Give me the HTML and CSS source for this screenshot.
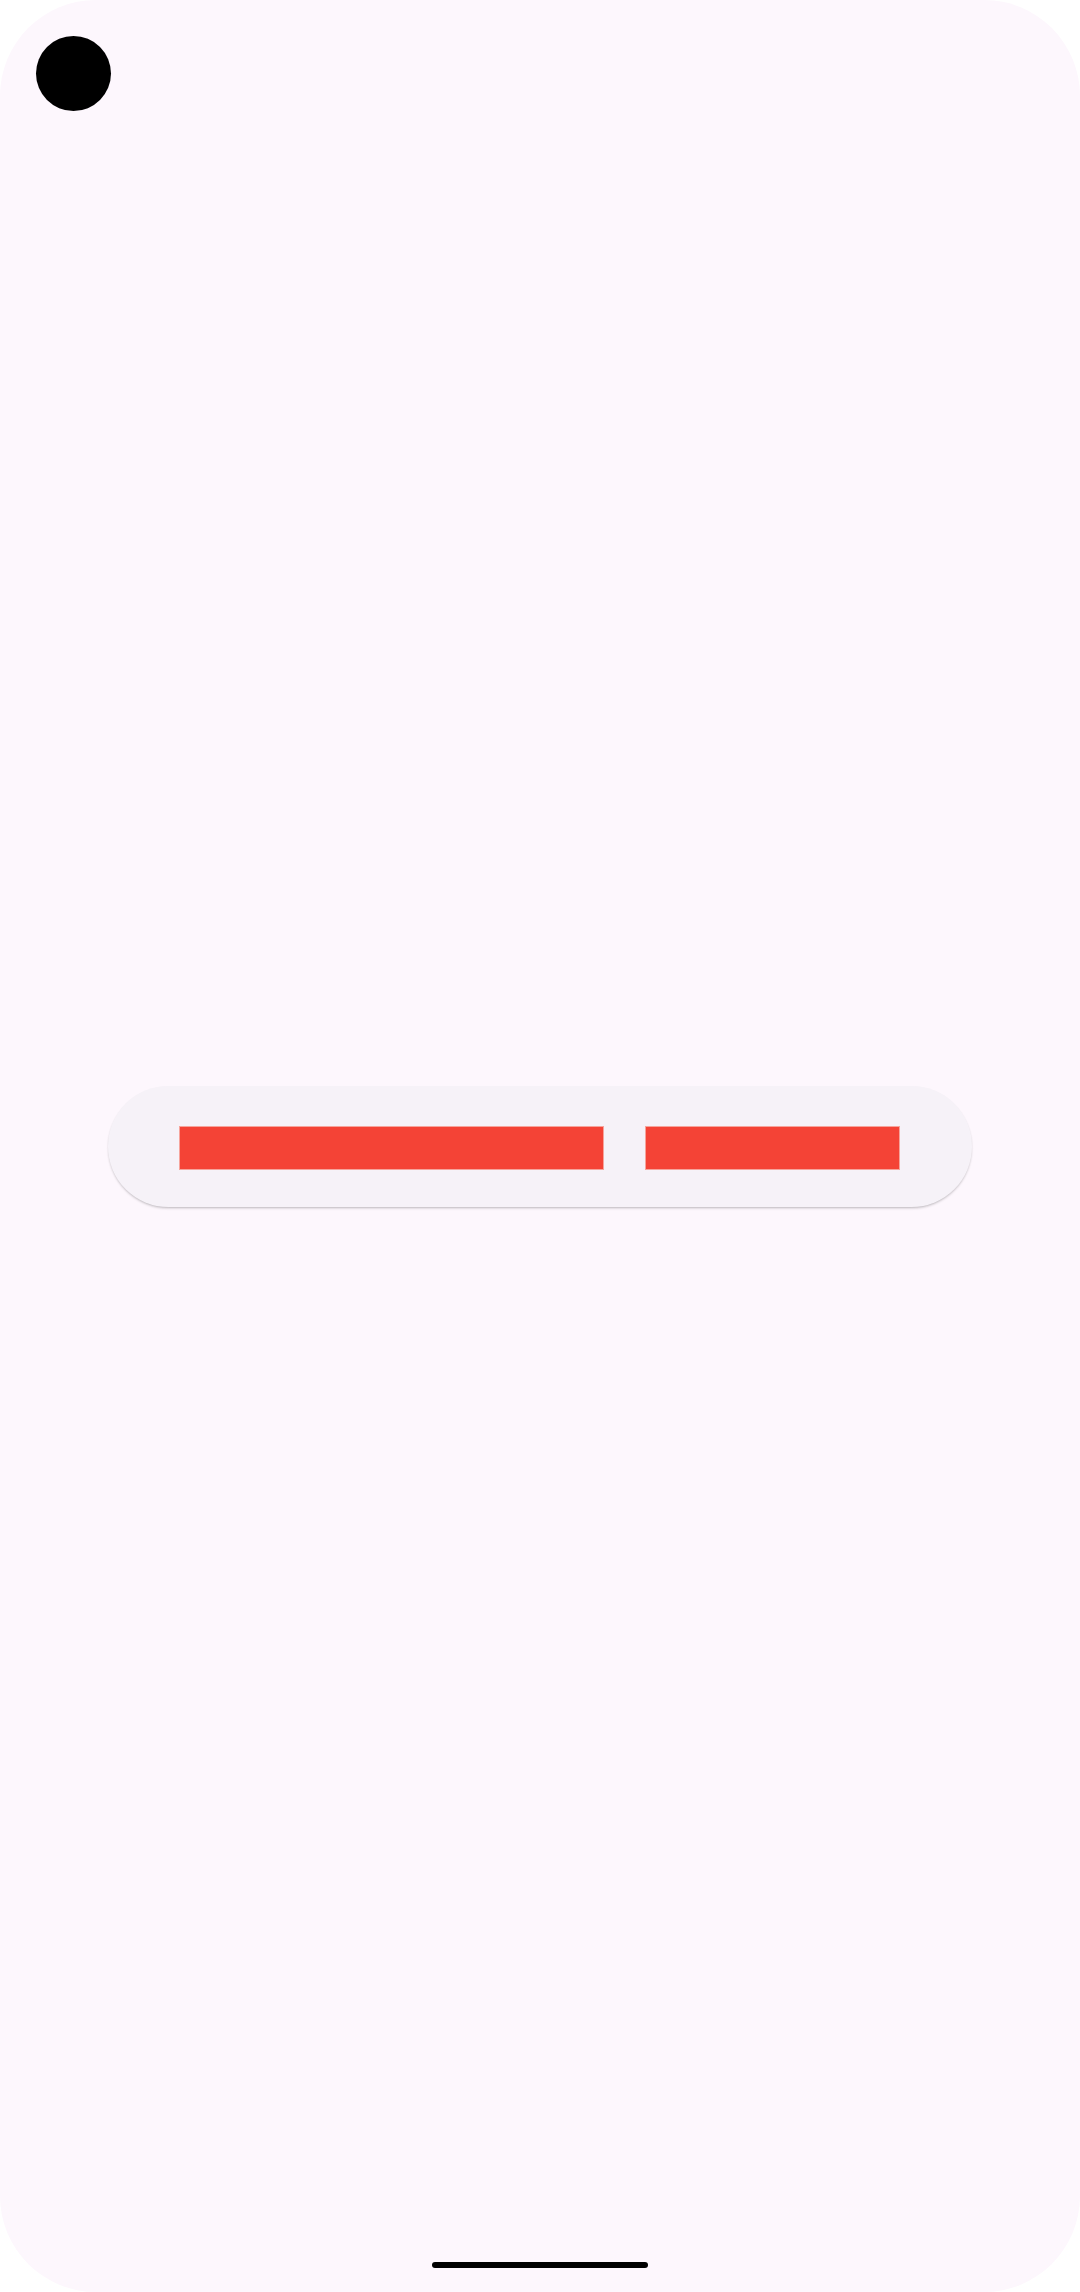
FILE: index.html
```html
<!DOCTYPE html>
<html lang="en">
<head>
<meta charset="utf-8">
<title>Screen</title>
<link rel="stylesheet" href="styles.css">
</head>
<body>
<div class="screen">
  <div class="camera"></div>
  <div class="content">
    <div class="pill">
      <div class="bar bar-long"></div>
      <div class="bar bar-short"></div>
    </div>
  </div>
  <div class="home-indicator"></div>
</div>
</body>
</html>
```
FILE: styles.css
```css
html, body {
  margin: 0;
  padding: 0;
  background: #ffffff;
  font-family: Roboto, "Noto Sans", sans-serif;
}
.screen {
  position: relative;
  width: 1080px;
  height: 2292px;
  border-radius: 96px;
  background: #fdf7fd;
  overflow: hidden;
  display: flex;
  flex-direction: column;
}
.camera {
  position: absolute;
  left: 36px;
  top: 36px;
  width: 75px;
  height: 75px;
  border-radius: 50%;
  background: #000;
}
.content {
  flex: 1;
  display: flex;
  align-items: center;
  justify-content: center;
}
.pill {
  box-sizing: border-box;
  width: 864px;
  height: 121px;
  border-radius: 60.5px;
  background: #f6f2f8;
  box-shadow: 0 2px 3px -1px rgba(0, 0, 0, 0.22), 0 1px 2px rgba(0, 0, 0, 0.06);
  display: flex;
  align-items: center;
  gap: 41px;
  padding: 4px 72px 0 71px;
}
.bar {
  height: 44px;
  background: #f44336;
  box-shadow: inset 0 0 0 1px #f6a49c;
}
.bar-long {
  width: 425px;
}
.bar-short {
  width: 255px;
}
.home-indicator {
  position: absolute;
  left: 432px;
  bottom: 24px;
  width: 216px;
  height: 6px;
  border-radius: 3px;
  background: #000;
}
```
